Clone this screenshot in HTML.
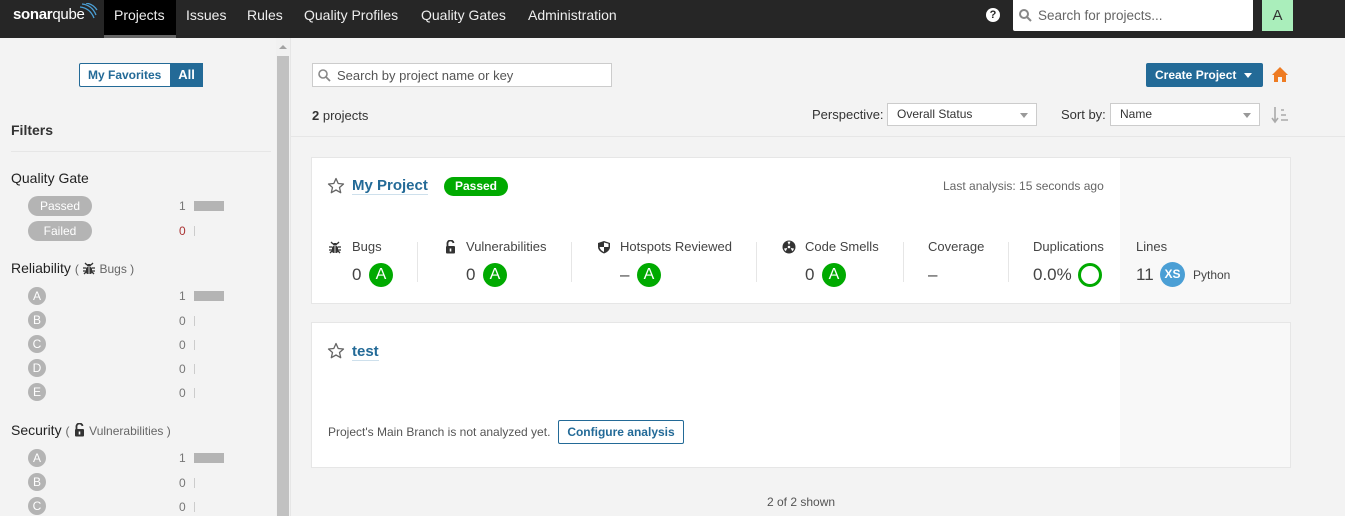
<!DOCTYPE html>
<html><head><meta charset="utf-8"><style>
*{box-sizing:border-box;margin:0;padding:0}
body{width:1345px;height:516px;overflow:hidden;background:#f3f3f3;font-family:"Liberation Sans",Arial,sans-serif;font-size:13px;color:#333;position:relative}
.a{position:absolute;white-space:nowrap}
.nav{left:0;top:0;width:1345px;height:38px;background:#262626}
.nl{color:#eee;font-size:14px;top:7px}
.gl{border-radius:10px;background:#b4b4b4;color:#fff;text-align:center;height:20px;line-height:20px;font-size:12px}
.rc{width:18px;height:18px;border-radius:50%;background:#b4b4b4;color:#fff;text-align:center;line-height:18px;font-size:12px}
.cnt{font-size:12px;color:#777}
.bar{height:10px;background:#b4b4b4;width:30px}
.tick{width:1px;height:10px;background:#ccc}
.card{background:#fff;border:1px solid #e6e6e6}
.grn{background:#00aa00;color:#fff;border-radius:50%;width:24px;height:24px;text-align:center;line-height:24px;font-size:16px}
.ml{font-size:13px;color:#444;top:239px}
.mv{font-size:17px;color:#444}
.sep{width:1px;height:40px;background:#e6e6e6;top:242px}
.sel{background:#fff;border:1px solid #ccc;height:23px;line-height:21px;padding-left:9px;font-size:12px;color:#333}
.sel:after{content:"";position:absolute;right:8px;top:9px;border:4px solid transparent;border-top:5px solid #999}
</style></head><body>
<svg width="0" height="0" style="position:absolute">
<defs>
<g id="bug"><path d="M3 2 L5 4 M11 2 L9 4" stroke="#333" stroke-width="1.3"/><rect x="5" y="3" width="4" height="2.5" rx="1" fill="#333"/><rect x="4" y="6" width="6" height="7" rx="2" fill="#333"/><path d="M1 7 H4 M10 7 H13 M1 10 H4 M10 10 H13 M2 13 L4 11 M12 13 L10 11" stroke="#333" stroke-width="1.3"/><path d="M7 6 V13" stroke="#fff" stroke-width="0.8"/></g>
<g id="lock"><path d="M3.5 6 V4 A3 3 0 0 1 9.5 3" stroke="#333" stroke-width="1.8" fill="none"/><rect x="2" y="6" width="9" height="7.5" rx="1" fill="#333"/><rect x="5.7" y="8.5" width="1.6" height="3" fill="#fff"/></g>
</defs></svg>
<div class="a nav"></div>
<div class="a" style="left:13px;top:6px;color:#fff;font-size:15px;font-weight:bold;letter-spacing:-0.3px">sonar<span style="font-weight:normal">qube</span></div>
<svg class="a" style="left:78px;top:3px" width="20" height="16"><path d="M2 4 Q12 5 16 15 M4 1 Q14 2 18 12 M8 0 Q15 1 19 7" stroke="#4b9fd5" stroke-width="1.3" fill="none"/></svg>
<div class="a" style="left:104px;top:0;width:72px;height:38px;background:#000;border-bottom:3px solid #666"></div>
<div class="a nl" style="left:114px">Projects</div>
<div class="a nl" style="left:186px">Issues</div>
<div class="a nl" style="left:247px">Rules</div>
<div class="a nl" style="left:304px">Quality Profiles</div>
<div class="a nl" style="left:421px">Quality Gates</div>
<div class="a nl" style="left:528px">Administration</div>
<div class="a" style="left:986px;top:8px;width:14px;height:14px;border-radius:50%;background:#fff;color:#262626;font-size:11px;font-weight:bold;text-align:center;line-height:14px">?</div>
<div class="a" style="left:1013px;top:0;width:240px;height:31px;background:#fff;border-radius:0 0 2px 2px"></div>
<svg class="a" style="left:1019px;top:9px" width="13" height="13"><circle cx="5" cy="5" r="4" stroke="#888" stroke-width="2" fill="none"/><path d="M8 8 L12 12" stroke="#888" stroke-width="2"/></svg>
<div class="a" style="left:1038px;top:8px;color:#666;font-size:13.5px">Search for projects...</div>
<div class="a" style="left:1262px;top:0;width:31px;height:31px;background:#aaeebb;color:#333;font-size:15px;text-align:center;line-height:31px">A</div>

<!-- sidebar -->
<div class="a" style="left:276px;top:38px;width:14px;height:478px;background:#f1f1f1"></div>
<div class="a" style="left:277px;top:56px;width:12px;height:460px;background:#c1c1c1"></div>
<div class="a" style="left:279px;top:45px;border:4px solid transparent;border-bottom:4px solid #a3a3a3;border-top:0"></div>
<div class="a" style="left:290px;top:38px;width:1px;height:478px;background:#e6e6e6"></div>
<div class="a" style="left:79px;top:63px;width:124px;height:24px;border:1px solid #236a97;border-radius:2px;background:#fff"></div>
<div class="a" style="left:170px;top:63px;width:33px;height:24px;background:#236a97;color:#fff;font-weight:bold;line-height:24px;text-align:center;font-size:13px">All</div>
<div class="a" style="left:88px;top:68px;color:#236a97;font-size:12px;font-weight:bold">My Favorites</div>
<div class="a" style="left:11px;top:122px;font-size:14px;font-weight:bold">Filters</div>
<div class="a" style="left:11px;top:151px;width:260px;height:1px;background:#e6e6e6"></div>
<div class="a" style="left:11px;top:170px;font-size:14px;color:#222">Quality Gate</div>
<div class="a gl" style="left:28px;top:196px;width:64px">Passed</div>
<div class="a gl" style="left:28px;top:221px;width:64px">Failed</div>
<div class="a cnt" style="left:179px;top:199px">1</div><div class="a bar" style="left:194px;top:201px"></div>
<div class="a cnt" style="left:179px;top:224px;color:#a33">0</div><div class="a tick" style="left:194px;top:226px"></div>
<div class="a" style="left:11px;top:260px;font-size:14px;color:#222">Reliability <span style="font-size:12px;color:#666">( <svg width="14" height="14" style="vertical-align:-2px"><use href="#bug"/></svg> Bugs )</span></div>

<div class="a rc" style="left:28px;top:287px">A</div><div class="a cnt" style="left:179px;top:289px">1</div><div class="a bar" style="left:194px;top:291px"></div>
<div class="a rc" style="left:28px;top:311px">B</div><div class="a cnt" style="left:179px;top:314px">0</div><div class="a tick" style="left:194px;top:316px"></div>
<div class="a rc" style="left:28px;top:335px">C</div><div class="a cnt" style="left:179px;top:338px">0</div><div class="a tick" style="left:194px;top:340px"></div>
<div class="a rc" style="left:28px;top:359px">D</div><div class="a cnt" style="left:179px;top:362px">0</div><div class="a tick" style="left:194px;top:364px"></div>
<div class="a rc" style="left:28px;top:383px">E</div><div class="a cnt" style="left:179px;top:386px">0</div><div class="a tick" style="left:194px;top:388px"></div>
<div class="a" style="left:11px;top:422px;font-size:14px;color:#222">Security <span style="font-size:12px;color:#666">( <svg width="13" height="14" style="vertical-align:-2px"><use href="#lock"/></svg> Vulnerabilities )</span></div>
<div class="a rc" style="left:28px;top:449px">A</div><div class="a cnt" style="left:179px;top:451px">1</div><div class="a bar" style="left:194px;top:453px"></div>
<div class="a rc" style="left:28px;top:473px">B</div><div class="a cnt" style="left:179px;top:476px">0</div><div class="a tick" style="left:194px;top:478px"></div>
<div class="a rc" style="left:28px;top:497px">C</div><div class="a cnt" style="left:179px;top:500px">0</div><div class="a tick" style="left:194px;top:502px"></div>

<!-- main header -->
<div class="a" style="left:312px;top:63px;width:300px;height:24px;background:#fff;border:1px solid #ccc"></div>
<svg class="a" style="left:318px;top:69px" width="13" height="13"><circle cx="5" cy="5" r="4" stroke="#888" stroke-width="1.6" fill="none"/><path d="M8 8 L12 12" stroke="#888" stroke-width="1.8"/></svg>
<div class="a" style="left:337px;top:68px;color:#555;font-size:13px">Search by project name or key</div>
<div class="a" style="left:1146px;top:63px;width:117px;height:24px;background:#236a97;border-radius:2px;color:#fff;font-weight:bold;font-size:12px;line-height:24px;padding-left:9px">Create Project</div>
<div class="a" style="left:1244px;top:73px;border:4px solid transparent;border-top:5px solid #fff"></div>
<svg class="a" style="left:1271px;top:66px" width="18" height="17"><path d="M9 1 L17 9 H15 V16 H11 V11 H7 V16 H3 V9 H1 Z" fill="#ee7b22"/></svg>
<div class="a" style="left:312px;top:108px"><b>2</b> projects</div>
<div class="a" style="left:812px;top:107px;color:#333">Perspective:</div>
<div class="a sel" style="left:887px;top:103px;width:150px">Overall Status</div>
<div class="a" style="left:1061px;top:107px;color:#333">Sort by:</div>
<div class="a sel" style="left:1110px;top:103px;width:150px">Name</div>
<svg class="a" style="left:1271px;top:106px" width="18" height="18"><path d="M4 1 V15 M1 12 L4 16 L7 12" stroke="#aaa" stroke-width="1.6" fill="none"/><path d="M10 4 H13 M10 9 H15 M10 14 H17" stroke="#aaa" stroke-width="1.6"/></svg>
<div class="a" style="left:291px;top:136px;width:1054px;height:1px;background:#e6e6e6"></div>

<!-- card 1 -->
<div class="a card" style="left:311px;top:157px;width:980px;height:147px"></div>
<div class="a" style="left:1120px;top:158px;width:170px;height:145px;background:#f8f8f8"></div>
<svg class="a" style="left:327px;top:177px" width="18" height="17"><path d="M9 1.5 L11.2 6.5 L16.5 7 L12.5 10.5 L13.7 15.7 L9 13 L4.3 15.7 L5.5 10.5 L1.5 7 L6.8 6.5 Z" fill="none" stroke="#666" stroke-width="1.3" stroke-linejoin="round"/></svg>
<div class="a" style="left:352px;top:177px;font-size:15px;font-weight:bold;color:#236a97;border-bottom:1px solid #cee0ec">My Project</div>
<div class="a" style="left:444px;top:177px;width:64px;height:19px;border-radius:10px;background:#00aa00;color:#fff;font-size:12px;font-weight:bold;text-align:center;line-height:19px">Passed</div>
<div class="a" style="left:943px;top:179px;font-size:12px;color:#666">Last analysis: 15 seconds ago</div>
<svg class="a" style="left:328px;top:240px" width="14" height="14"><use href="#bug"/></svg>
<div class="a ml" style="left:352px">Bugs</div>
<div class="a mv" style="left:352px;top:265px">0</div><div class="a grn" style="left:369px;top:263px">A</div>
<div class="a sep" style="left:417px"></div>
<svg class="a" style="left:444px;top:240px" width="13" height="14"><use href="#lock"/></svg>
<div class="a ml" style="left:466px">Vulnerabilities</div>
<div class="a mv" style="left:466px;top:265px">0</div><div class="a grn" style="left:483px;top:263px">A</div>
<div class="a sep" style="left:571px"></div>
<svg class="a" style="left:597px;top:240px" width="14" height="14"><path d="M7 1 L13 3 V7 C13 10 10 12.5 7 13.5 C4 12.5 1 10 1 7 V3 Z" fill="#333"/><path d="M7 2.5 V7 H11.5 V3.8 Z M7 7 V12 C5 11 3 9.5 2.6 7 Z" fill="#fff"/></svg>
<div class="a ml" style="left:620px">Hotspots Reviewed</div>
<div class="a mv" style="left:620px;top:265px">–</div><div class="a grn" style="left:637px;top:263px">A</div>
<div class="a sep" style="left:756px"></div>
<svg class="a" style="left:782px;top:240px" width="14" height="14"><circle cx="7" cy="7" r="6.5" fill="#333"/><circle cx="7" cy="7" r="1.3" fill="#fff"/><path d="M7 5 L5.5 1.8 A5 5 0 0 1 8.5 1.8 Z M5.3 8 L2 8.5 A5 5 0 0 0 3.8 11.3 Z M8.7 8 L12 8.5 A5 5 0 0 1 10.2 11.3 Z" fill="#fff"/></svg>
<div class="a ml" style="left:805px">Code Smells</div>
<div class="a mv" style="left:805px;top:265px">0</div><div class="a grn" style="left:822px;top:263px">A</div>
<div class="a sep" style="left:903px"></div>
<div class="a ml" style="left:928px">Coverage</div>
<div class="a mv" style="left:928px;top:265px">–</div>
<div class="a sep" style="left:1008px"></div>
<div class="a ml" style="left:1033px">Duplications</div>
<div class="a mv" style="left:1033px;top:265px">0.0%</div>
<div class="a" style="left:1078px;top:263px;width:24px;height:24px;border-radius:50%;border:3px solid #00aa00"></div>
<div class="a ml" style="left:1136px">Lines</div>
<div class="a mv" style="left:1136px;top:265px">11</div>
<div class="a" style="left:1160px;top:262px;width:25px;height:25px;border-radius:50%;background:#4b9fd5;color:#fff;font-size:12px;font-weight:bold;text-align:center;line-height:25px">XS</div>
<div class="a" style="left:1193px;top:268px;font-size:12px;color:#444">Python</div>

<!-- card 2 -->
<div class="a card" style="left:311px;top:322px;width:980px;height:146px"></div>
<div class="a" style="left:1120px;top:323px;width:170px;height:144px;background:#f8f8f8"></div>
<svg class="a" style="left:327px;top:342px" width="18" height="17"><path d="M9 1.5 L11.2 6.5 L16.5 7 L12.5 10.5 L13.7 15.7 L9 13 L4.3 15.7 L5.5 10.5 L1.5 7 L6.8 6.5 Z" fill="none" stroke="#666" stroke-width="1.3" stroke-linejoin="round"/></svg>
<div class="a" style="left:352px;top:343px;font-size:15px;font-weight:bold;color:#236a97;border-bottom:1px solid #cee0ec">test</div>
<div class="a" style="left:328px;top:425px;font-size:12px;color:#555">Project's Main Branch is not analyzed yet.</div>
<div class="a" style="left:558px;top:420px;width:126px;height:24px;border:1px solid #236a97;border-radius:2px;background:#fff;color:#236a97;font-weight:bold;font-size:12px;text-align:center;line-height:22px">Configure analysis</div>
<div class="a" style="left:767px;top:495px;font-size:12px;color:#555">2 of 2 shown</div>
</body></html>
